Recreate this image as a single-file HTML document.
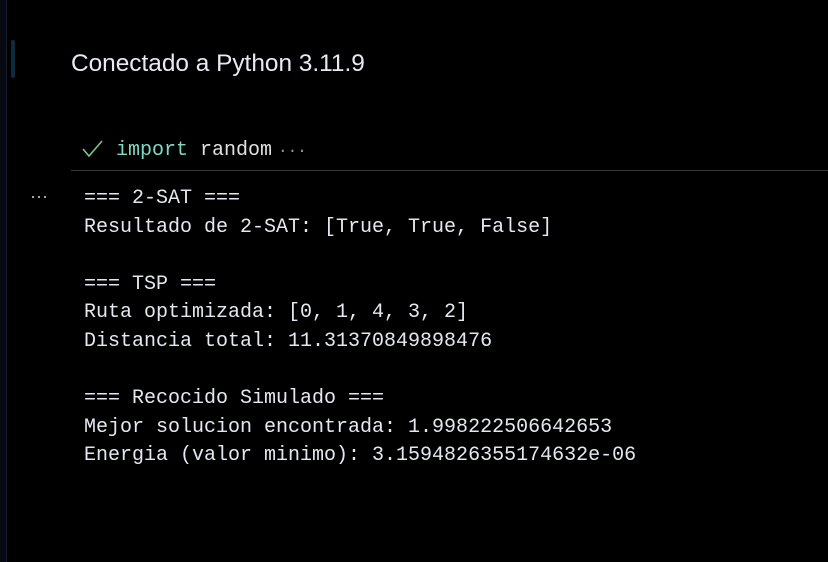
<!DOCTYPE html>
<html><head><meta charset="utf-8"><style>
html,body{margin:0;padding:0;width:828px;height:562px;background:#000;overflow:hidden;position:relative;color:#d4d4d4}
.side{position:absolute;left:0;top:0;width:6px;height:562px;background:#070b11;border-right:1px solid #15202b}
.bar{position:absolute;left:11px;top:40px;width:4px;height:38px;background:#0f2b42;border-radius:2px}
.title{position:absolute;left:71px;top:50px;font:24.4px "Liberation Sans",sans-serif;color:#e6ebf2;white-space:nowrap}
.mono{font-family:"Liberation Mono",monospace;font-size:20px;white-space:pre}
.code{position:absolute;left:116px;top:139px;color:#e0e0e0}
.kw{color:#7fd8c4}
.ell{color:#999;font-size:16px;margin-left:6px}
.check{position:absolute;left:82px;top:139px}
.sep{position:absolute;left:71px;top:170px;width:757px;height:1px;background:#3a3a3a}
.dots{position:absolute;left:30px;top:186px;color:#bbb;font:18px "Liberation Sans",sans-serif;letter-spacing:0px}
.out{position:absolute;left:84px;top:185px;line-height:28.6px;color:#e4e8ee}
</style></head><body>
<div class="side"></div>
<div class="bar"></div>
<div class="title">Conectado a Python 3.11.9</div>
<svg class="check" width="22" height="20" viewBox="0 0 22 20"><path d="M1 10 L7 17 L20 2" fill="none" stroke="#73c991" stroke-width="1.6"/></svg>
<div class="code mono"><span class="kw">import</span> random<span class="ell">···</span></div>
<div class="sep"></div>
<div class="dots">···</div>
<div class="out mono">=== 2-SAT ===
Resultado de 2-SAT: [True, True, False]

=== TSP ===
Ruta optimizada: [0, 1, 4, 3, 2]
Distancia total: 11.31370849898476

=== Recocido Simulado ===
Mejor solucion encontrada: 1.998222506642653
Energia (valor minimo): 3.1594826355174632e-06</div>
</body></html>
